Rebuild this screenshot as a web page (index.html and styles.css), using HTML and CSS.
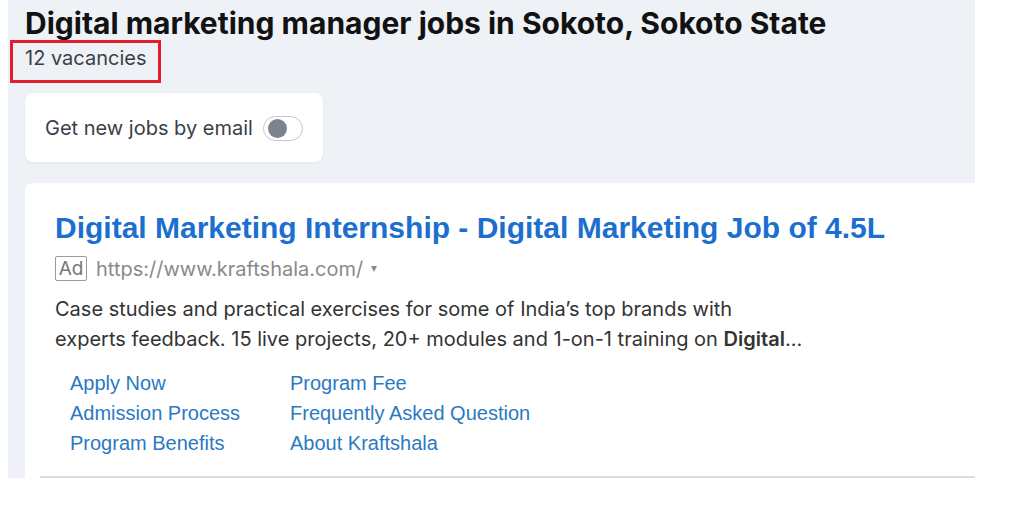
FILE: index.html
```html
<!DOCTYPE html>
<html lang="en">
<head>
<meta charset="utf-8">
<title>Digital marketing manager jobs in Sokoto</title>
<link rel="stylesheet" href="styles.css">
</head>
<body>
<div class="page">
  <h1 class="heading">Digital marketing manager jobs in Sokoto, Sokoto State</h1>
  <div class="count">
    <span class="count-text">12 vacancies</span>
    <span class="highlight"></span>
  </div>
  <div class="subscribe">
    <span class="subscribe-label">Get new jobs by email</span>
    <span class="toggle"><span class="knob"></span></span>
  </div>
  <div class="ad-card">
    <a class="ad-title" href="#">Digital Marketing Internship - Digital Marketing Job of 4.5L</a>
    <div class="ad-meta">
      <span class="ad-badge">Ad</span>
      <span class="ad-url">https://www.kraftshala.com/</span>
      <span class="ad-caret"></span>
    </div>
    <p class="ad-desc">Case studies and practical exercises for some of India’s top brands with<br>experts feedback. 15 live projects, 20+ modules and 1-on-1 training on <b>Digital</b>...</p>
    <div class="ad-links">
      <a href="#">Apply Now</a>
      <a href="#">Program Fee</a>
      <a href="#">Admission Process</a>
      <a href="#">Frequently Asked Question</a>
      <a href="#">Program Benefits</a>
      <a href="#">About Kraftshala</a>
    </div>
    <div class="ad-rule"></div>
  </div>
</div>
</body>
</html>
```

FILE: styles.css
```css
html, body {
  margin: 0;
  padding: 0;
  background: #ffffff;
}

.page {
  width: 950px;
  margin-left: 8px;
  padding: 6px 0 0 17px;
  background: #eef1f6;
  font-family: Inter, "Noto Sans", sans-serif;
}

.heading {
  margin: 0;
  font-family: Inter, Roboto, sans-serif;
  font-weight: 700;
  font-size: 30px;
  line-height: 34px;
  color: #121212;
}

.count {
  position: relative;
  margin-top: 6px;
  height: 24px;
}

.count-text {
  font-size: 20px;
  line-height: 24px;
  color: #3a3f47;
}

.highlight {
  position: absolute;
  left: -15px;
  top: -6px;
  width: 145px;
  height: 37px;
  border: 3px solid #e11f2b;
}

.subscribe {
  margin-top: 23px;
  width: 298px;
  height: 69px;
  box-sizing: border-box;
  padding: 0 20px;
  display: flex;
  align-items: center;
  gap: 10px;
  background: #ffffff;
  border-radius: 8px;
  box-shadow: 0 1px 3px rgba(30, 40, 60, 0.06);
}

.subscribe-label {
  font-size: 20px;
  color: #3a3f47;
  white-space: nowrap;
}

.toggle {
  box-sizing: border-box;
  width: 41px;
  height: 25px;
  border: 1px solid #c3c7ce;
  border-radius: 13px;
  display: flex;
  align-items: center;
  padding-left: 4px;
  margin-top: 1px;
}

.knob {
  width: 19px;
  height: 19px;
  border-radius: 50%;
  background: #7b8391;
}

.ad-card {
  margin-top: 21px;
  background: #ffffff;
  border-radius: 8px 0 0 0;
  padding: 30px 0 0 30px;
}

.ad-title {
  display: block;
  font-family: "Liberation Sans", Arial, sans-serif;
  font-weight: 700;
  font-size: 30px;
  line-height: 30px;
  color: #1c6fce;
  text-decoration: none;
}

.ad-meta {
  margin-top: 13px;
  display: flex;
  align-items: center;
  height: 25px;
}

.ad-badge {
  box-sizing: border-box;
  width: 32px;
  height: 25px;
  border: 1px solid #9b9b9b;
  border-radius: 2px;
  display: flex;
  align-items: center;
  justify-content: center;
  font-size: 19px;
  color: #777777;
}

.ad-url {
  margin-left: 9px;
  font-size: 20px;
  color: #8a8a8a;
}

.ad-caret {
  margin-left: 8px;
  width: 0;
  height: 0;
  border-left: 3px solid transparent;
  border-right: 3px solid transparent;
  border-top: 6px solid #8a8a8a;
}

.ad-desc {
  margin: 13px 0 0;
  font-size: 20px;
  line-height: 30px;
  color: #333333;
}

.ad-desc b {
  font-weight: 600;
}

.ad-links {
  margin-top: 14px;
  padding-left: 15px;
  display: grid;
  grid-template-columns: 220px auto;
  font-family: "Liberation Sans", Arial, sans-serif;
  font-size: 20px;
  line-height: 30px;
}

.ad-links a {
  color: #2b79c2;
  text-decoration: none;
}

.ad-rule {
  margin: 18px 0 0 -15px;
  height: 2px;
  background: #dcdcdc;
}
```
